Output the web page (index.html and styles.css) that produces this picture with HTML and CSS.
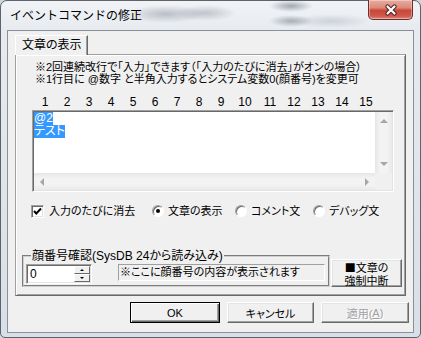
FILE: index.html
```html
<!DOCTYPE html>
<html>
<head>
    <meta charset="utf-8">
    <title>イベントコマンドの修正</title>
    <link rel="stylesheet" href="styles.css">
</head>
<body>
    <div class="window">
        <div class="titlebar">
            <span class="title">イベントコマンドの修正</span>
            <div class="close-btn">
                <svg width="16" height="12" viewBox="0 0 16 12">
                    <path d="M4.5 2.5 L11.5 9.5 M11.5 2.5 L4.5 9.5" stroke="#4a2522" stroke-width="4.2" stroke-linecap="round"/>
                    <path d="M4.5 2.5 L11.5 9.5 M11.5 2.5 L4.5 9.5" stroke="#fff" stroke-width="2.2" stroke-linecap="round"/>
                </svg>
            </div>
        </div>

        <div class="client">
            <div class="tabs">
                <div class="tab">文章の表示</div>
            </div>

            <div class="panel">
                <p class="note first">※2回連続改行で「入力」できます（「入力のたびに消去」がオンの場合）</p>
                <p class="note">※1行目に @数字 と半角入力するとシステム変数0(顔番号)を変更可</p>

                <div class="ruler">
                    <span>1</span><span>2</span><span>3</span><span>4</span><span>5</span>
                    <span>6</span><span>7</span><span>8</span><span>9</span>
                    <span class="ten">10</span><span class="wide">11</span><span class="wide">12</span>
                    <span class="wide">13</span><span class="wide">14</span><span class="wide">15</span>
                </div>

                <div class="editor">
                    <div class="edit-text"><span class="sel">@2</span><br><span class="sel">テスト</span></div>
                    <div class="vscroll">
                        <span class="arrow up"></span>
                        <span class="arrow down"></span>
                    </div>
                    <div class="hscroll">
                        <span class="arrow left"></span>
                        <span class="arrow right"></span>
                    </div>
                    <div class="corner"></div>
                </div>

                <div class="options">
                    <label class="opt opt-check">
                        <span class="checkbox">
                            <svg width="9" height="9" viewBox="0 0 9 9"><path d="M1 4 L3.3 6.5 L8 1.5" fill="none" stroke="#000" stroke-width="2"/></svg>
                        </span>
                        入力のたびに消去
                    </label>
                    <label class="opt opt-r1"><span class="radio checked"></span>文章の表示</label>
                    <label class="opt opt-r2"><span class="radio"></span>コメント文</label>
                    <label class="opt"><span class="radio"></span>デバッグ文</label>
                </div>

                <div class="face-row">
                    <fieldset class="face-group">
                        <legend>顔番号確認(SysDB 24から読み込み)</legend>
                        <div class="group-body">
                            <div class="spin">
                                <div class="spin-input">0</div>
                                <div class="spin-btns">
                                    <span class="spin-btn"><span class="tri up"></span></span>
                                    <span class="spin-btn"><span class="tri down"></span></span>
                                </div>
                            </div>
                            <div class="face-preview">※ここに顔番号の内容が表示されます</div>
                        </div>
                    </fieldset>
                    <div class="btn stop-btn"><span class="cjk">■</span>文章の<br>強制中断</div>
                </div>
            </div>

            <div class="buttons">
                <div class="btn default">OK</div>
                <div class="btn cancel">キャンセル</div>
                <div class="btn apply disabled">適用(<u>A</u>)</div>
            </div>
        </div>
    </div>
</body>
</html>
```

FILE: styles.css
```css
body {
    margin: 0;
    width: 421px;
    height: 338px;
    overflow: hidden;
    background: #cfd6de;
    font-family: "Liberation Sans", "Noto Sans CJK JP", sans-serif;
    font-size: 12px;
    color: #000;
    font-feature-settings: "palt";
}

.window {
    width: 421px;
    height: 338px;
    box-sizing: border-box;
    border: 1px solid #5d636b;
    border-radius: 7px 7px 5px 5px;
    padding: 0 6px 4px 6px;
    display: flex;
    flex-direction: column;
    background:
        radial-gradient(ellipse 40px 9px at 165px 13px, rgba(90, 100, 112, 0.35), transparent),
        radial-gradient(ellipse 30px 8px at 205px 12px, rgba(90, 100, 112, 0.3), transparent),
        radial-gradient(ellipse 22px 6px at 290px 5px, rgba(70, 78, 90, 0.45), transparent),
        radial-gradient(ellipse 22px 6px at 290px 20px, rgba(70, 78, 90, 0.4), transparent),
        radial-gradient(ellipse 40px 7px at 330px 20px, rgba(120, 128, 140, 0.25), transparent),
        linear-gradient(to bottom, #f1f3f6 0, #e7ebf0 28px, #d9dfe6 100%);
}

/* title bar */
.titlebar {
    height: 29px;
    display: flex;
    align-items: center;
    flex-shrink: 0;
}

.title {
    padding-left: 3px;
    padding-bottom: 2px;
    font-size: 12px;
    font-feature-settings: normal;
}

.close-btn {
    margin-left: auto;
    margin-right: 1px;
    margin-top: -1px;
    align-self: flex-start;
    width: 45px;
    height: 20px;
    box-sizing: border-box;
    border: 1px solid #6e2d28;
    border-top: none;
    border-radius: 0 0 5px 5px;
    background: linear-gradient(to bottom, #e7ad9f 0, #dd8a7b 40%, #c8473b 55%, #d0594c 85%, #dd8a7d 100%);
    box-shadow: inset 0 0 0 1px rgba(255, 255, 255, 0.35);
    display: flex;
    align-items: center;
    justify-content: center;
}

/* client area */
.client {
    flex: 1;
    border: 1px solid #8a9098;
    background: #f0f0f0;
    display: flex;
    flex-direction: column;
}

.tabs {
    display: flex;
    padding-left: 7px;
    margin-top: 4px;
}

.tab {
    width: 73px;
    height: 20px;
    box-sizing: border-box;
    padding-left: 6px;
    line-height: 18px;
    border: 1px solid #fff;
    border-bottom: none;
    border-right: 1px solid #696969;
    box-shadow: inset -1px 0 0 #a0a0a0;
    position: relative;
    z-index: 1;
    margin-bottom: -1px;
    background: #f0f0f0;
}

.panel {
    margin-left: 7px;
    width: 391px;
    height: 242px;
    box-sizing: border-box;
    border: 1px solid;
    border-color: #a0a0a0 #696969 #696969 #a0a0a0;
    box-shadow: inset 1px 1px 0 #fff, inset -1px -1px 0 #a0a0a0;
    font-size: 11px;
}

.note {
    margin: 0 0 0 19px;
    line-height: 12px;
    white-space: nowrap;
}

.note.first {
    margin-top: 6px;
}

.ruler {
    display: flex;
    margin: 11px 0 0 18px;
    line-height: 12px;
    font-size: 12px;
}

.ruler span {
    width: 22px;
    text-align: center;
}

.ruler .ten {
    width: 26px;
}

.ruler .wide {
    width: 24px;
}

/* text box */
.editor {
    margin: 2px 0 0 16px;
    width: 362px;
    height: 82px;
    box-sizing: border-box;
    border: 1px solid;
    border-color: #a0a0a0 #fff #fff #a0a0a0;
    box-shadow: inset 1px 1px 0 #696969, inset -1px -1px 0 #e3e3e3;
    padding: 1px;
    background: #fff;
    display: grid;
    grid-template-columns: 1fr 17px;
    grid-template-rows: 1fr 17px;
}

.edit-text {
    font-size: 12px;
    line-height: 13px;
}

.sel {
    display: inline-block;
    height: 13px;
    line-height: 13px;
    vertical-align: top;
    background: #3399ff;
    color: #fff;
}

.vscroll {
    background: linear-gradient(to right, #e6e6e6, #f3f3f3 30%, #f3f3f3 70%, #e9e9e9);
    display: flex;
    flex-direction: column;
    justify-content: space-between;
    align-items: center;
    padding: 7px 0;
}

.hscroll {
    background: linear-gradient(to bottom, #e6e6e6, #f3f3f3 30%, #f3f3f3 70%, #e9e9e9);
    display: flex;
    justify-content: space-between;
    align-items: center;
    padding: 0 6px;
}

.corner {
    background: #f0f0f0;
}

.arrow {
    width: 0;
    height: 0;
    border: 4px solid transparent;
}

.arrow.up {
    border-top: none;
    border-bottom: 4px solid #a7a7a7;
}

.arrow.down {
    border-bottom: none;
    border-top: 4px solid #a7a7a7;
}

.arrow.left {
    border-left: none;
    border-right: 4px solid #a7a7a7;
}

.arrow.right {
    border-right: none;
    border-left: 4px solid #a7a7a7;
}

/* check & radios */
.options {
    display: flex;
    align-items: center;
    margin: 12px 0 0 15px;
    height: 14px;
    line-height: 14px;
}

.opt {
    display: flex;
    align-items: center;
    white-space: nowrap;
}

.opt-check {
    width: 121px;
}

.opt-r1 {
    width: 83px;
}

.opt-r2 {
    width: 78px;
}

.checkbox {
    width: 13px;
    height: 13px;
    box-sizing: border-box;
    margin-right: 5px;
    border: 1px solid;
    border-color: #a0a0a0 #fff #fff #a0a0a0;
    box-shadow: inset 1px 1px 0 #696969, inset -1px -1px 0 #e3e3e3;
    background: #fff;
    display: flex;
    align-items: center;
    justify-content: center;
}

.radio {
    width: 12px;
    height: 12px;
    box-sizing: border-box;
    margin-right: 4px;
    border-radius: 50%;
    border: 1px solid;
    border-color: #a0a0a0 #fff #fff #a0a0a0;
    box-shadow: inset 1px 1px 0 #696969;
    background: #fff;
    position: relative;
}

.radio.checked::after {
    content: "";
    position: absolute;
    left: 3px;
    top: 3px;
    width: 4px;
    height: 4px;
    border-radius: 50%;
    background: #000;
}

/* face number group */
.face-row {
    display: flex;
    align-items: flex-start;
    margin: 31px 0 0 6px;
}

.face-group {
    margin: 0;
    padding: 0 2px 1px 2px;
    width: 308px;
    box-sizing: border-box;
    border: 2px groove #d0d0d0;
}

.face-group legend {
    padding: 0 1px;
    margin-left: 5px;
    font-size: 12px;
    line-height: 14px;
    white-space: nowrap;
}

.group-body {
    display: flex;
    align-items: flex-start;
    margin-top: 1px;
}

.spin {
    display: flex;
    width: 66px;
    height: 20px;
    box-sizing: border-box;
    border: 1px solid;
    border-color: #a0a0a0 #fff #fff #a0a0a0;
    box-shadow: inset 1px 1px 0 #696969, inset -1px -1px 0 #e3e3e3;
    background: #fff;
    padding: 1px;
}

.spin-input {
    flex: 1;
    padding-left: 2px;
    font-size: 12px;
    line-height: 17px;
}

.spin-btns {
    width: 16px;
    display: flex;
    flex-direction: column;
}

.spin-btn {
    flex: 1;
    box-sizing: border-box;
    background: #f0f0f0;
    border: 1px solid;
    border-color: #fff #696969 #696969 #fff;
    display: flex;
    align-items: center;
    justify-content: center;
}

.tri {
    width: 0;
    height: 0;
    border: 2px solid transparent;
}

.tri.up {
    border-top: none;
    border-bottom: 2px solid #000;
}

.tri.down {
    border-bottom: none;
    border-top: 2px solid #000;
}

.face-preview {
    margin-left: 26px;
    width: 207px;
    height: 17px;
    box-sizing: border-box;
    border: 1px solid;
    border-color: #a0a0a0 #fff #fff #a0a0a0;
    padding-left: 1px;
    line-height: 15px;
    white-space: nowrap;
}

/* buttons */
.btn {
    box-sizing: border-box;
    background: #f0f0f0;
    border: 1px solid;
    border-color: #fff #696969 #696969 #fff;
    box-shadow: inset -1px -1px 0 #a0a0a0, inset 1px 1px 0 #e3e3e3;
    display: flex;
    align-items: center;
    justify-content: center;
    text-align: center;
    white-space: nowrap;
    font-size: 11px;
}

.stop-btn {
    display: block;
    padding-top: 1px;
    margin: 10px 0 0 1px;
    width: 71px;
    height: 28px;
    line-height: 13px;
    font-size: 11px;
}

.cjk {
    font-family: "Noto Sans CJK JP", sans-serif;
}

.buttons {
    display: flex;
    justify-content: flex-end;
    gap: 7px;
    margin-top: 6px;
    padding-right: 4px;
}

.buttons .btn {
    height: 21px;
    width: 87px;
}

.buttons .default {
    width: 90px;
    border-color: #000;
    box-shadow: inset 1px 1px 0 #fff, inset -1px -1px 0 #696969, inset -2px -2px 0 #a0a0a0;
}

.buttons .apply {
    width: 88px;
}

.btn.disabled {
    color: #a0a0a0;
    text-shadow: 1px 1px 0 #fff;
}
```
